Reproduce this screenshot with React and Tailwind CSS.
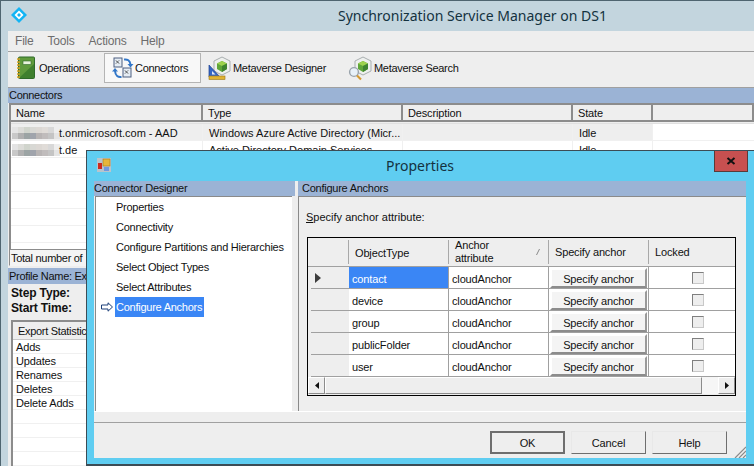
import React from "react";

function Diamond() {
  return (
    <svg width="18" height="18" viewBox="0 0 18 18" className="mb-[2px] block">
      <polygon points="9,1 17,9 9,17 1,9" fill="#12b4f4" />
      <polygon points="9,4.5 13.5,9 9,13.5 4.5,9" fill="#ffffff" />
      <polygon points="9,7 11,9 9,11 7,9" fill="#12b4f4" />
    </svg>
  );
}

function Notebook() {
  return (
    <svg width="20" height="24" viewBox="0 0 20 24" className="block">
      <rect x="2.5" y="1" width="16" height="21.5" rx="1" fill="#5f9a3c" stroke="#2f6a2a" />
      <polygon points="3,22 18,22 18,8" fill="#3f7f2e" />
      <rect x="7" y="5" width="8" height="3.5" fill="#e8f2dc" stroke="#2f6a2a" strokeWidth=".6" />
      {[3, 6, 9, 12, 15, 18, 21].map((y) => (
        <rect key={y} x="1" y={y - 0.7} width="3" height="1.5" fill="#d6a21f" />
      ))}
    </svg>
  );
}

function ConnIcon() {
  return (
    <svg width="22" height="22" viewBox="0 0 22 22" className="block">
      <rect x="2" y="1" width="8" height="9" fill="#e6edf4" stroke="#4c5f80" />
      <rect x="11" y="11" width="8" height="9" fill="#e6edf4" stroke="#4c5f80" />
      <path d="M4 3.5l3 3M7 3.5l-1 1M4 6.5l1-1M13 13.5l3 3M16 13.5l-1 1M13 16.5l1-1" stroke="#333" fill="none" />
      <path d="M12 2.5c3.5-.5 6 1 6.5 5" stroke="#3277c8" strokeWidth="2" fill="none" />
      <polygon points="15.5,7 21.5,7 18.5,10.5" fill="#3277c8" />
      <path d="M9.5 20c-3.5.5-6-1-6.5-6" stroke="#3277c8" strokeWidth="2" fill="none" />
      <polygon points="0,14.5 6,14.5 3,11" fill="#3277c8" />
    </svg>
  );
}

function Cube() {
  return (
    <g>
      <polygon points="14,1 22,5 22,15 14,19 6,15 6,5" fill="#eef0ee" stroke="#a9aeb0" />
      <polygon points="14,5 19,7.5 19,13 14,16 9,13 9,7.5" fill="#5fa63a" />
      <polygon points="14,5 19,7.5 14,10 9,7.5" fill="#9dd24e" />
      <polygon points="14,10 19,7.5 19,13 14,16" fill="#3f8430" />
    </g>
  );
}

function DesignerIcon() {
  return (
    <svg width="24" height="24" viewBox="0 0 24 24" className="block">
      <Cube />
      <polygon points="1,21 1,9 12,21" fill="#3566c4" stroke="#1e3f8e" strokeWidth=".7" />
      <polygon points="4,18.5 4,15 7.5,18.5" fill="#dfe8f7" />
      <rect x="1" y="20" width="16" height="3.5" fill="#e0b332" stroke="#9a7615" strokeWidth=".6" />
    </svg>
  );
}

function SearchIcon() {
  return (
    <svg width="25" height="25" viewBox="0 0 25 25" className="block">
      <g transform="translate(1 0)">
        <Cube />
      </g>
      <circle cx="6" cy="16" r="4.4" fill="#e8f1f8" stroke="#9aa3ab" strokeWidth="1.4" />
      <line x1="9" y1="19.5" x2="13" y2="23.5" stroke="#d49a32" strokeWidth="2.2" />
    </svg>
  );
}

function DialogIcon() {
  return (
    <svg width="14" height="14" viewBox="0 0 14 14" className="mb-[3px] block">
      <rect width="14" height="14" fill="#b9c4cc" />
      <rect x="6" y="1" width="7" height="7" fill="#e6b63a" stroke="#a87d18" strokeWidth=".6" />
      <rect x="1" y="5" width="4" height="6" fill="#cc2a1e" />
      <rect x="7" y="9" width="5" height="4" fill="#6f9ae0" />
    </svg>
  );
}

function HollowArrow() {
  return (
    <svg width="12" height="10" viewBox="0 0 12 10" className="block">
      <path d="M.5 3h6.5V.8L11.5 5 7 9.2V7H.5z" fill="#ffffff" stroke="#1c3f78" />
    </svg>
  );
}

function Mosaic() {
  const top = ["#e4e4e4", "#dcdcd8", "#d0d4cc", "#d8d8d4", "#dcd8d4", "#e0dcd8", "#d8d8d8", "#eeeeee"];
  const bottom = ["#c8c8c8", "#b0b0b0", "#9ca4a4", "#a0a4ac", "#b8b4b4", "#c0bcbc", "#c4c4c4", "#e4e4e4"];
  return (
    <span className="flex h-[12px] w-[48px] shrink-0 flex-col">
      {[top, bottom].map((row, r) => (
        <span key={r} className="flex flex-1">
          {row.map((c, i) => (
            <span key={i} className="h-full flex-1" style={{ backgroundColor: c }} />
          ))}
        </span>
      ))}
    </span>
  );
}

function ListHeader({ w, children, grow }) {
  return (
    <div
      className={`${grow ? "flex-1" : "shrink-0"} flex h-[17px] items-center border-r-2 border-b-2 border-r-[#8c8c8c] border-b-[#8c8c8c] pt-px pl-[5px] text-[#111]`}
      style={w ? { width: w } : undefined}
    >
      {children}
    </div>
  );
}

function ListRow({ first, name, type, state, shaded }) {
  const bg = shaded ? "bg-[#eeeeee]" : "bg-white";
  return (
    <div className="flex h-[17px] shrink-0 border-b border-[#f0f0f0] bg-white">
      <div className={`flex w-[192px] shrink-0 items-center overflow-hidden border-r border-[#f0f0f0] pt-[2px] pl-px ${bg}`}>
        {first && <Mosaic />}
        <span className="-ml-px whitespace-nowrap tracking-normal">{name}</span>
      </div>
      <div className={`flex w-[200px] shrink-0 items-center border-r border-[#f0f0f0] pt-[2px] pl-[6px] whitespace-nowrap tracking-normal ${bg}`}>{type}</div>
      <div className={`w-[170px] shrink-0 border-r border-[#f0f0f0] ${bg}`} />
      <div className={`flex w-[80px] shrink-0 items-center border-r border-[#f0f0f0] pt-[2px] pl-[6px] ${bg}`}>{state}</div>
      <div className="flex-1" />
    </div>
  );
}

function GridRow({ name, selected }) {
  return (
    <div className="flex h-[22px] shrink-0">
      <div className="relative flex w-[41px] shrink-0 items-center bg-[#eeeeee]">
        <div className="absolute right-0 bottom-0 left-[3px] h-px bg-[#a0a0a0]" />
        {selected && (
          <svg width="6" height="10" viewBox="0 0 6 10" className="ml-[7px] block">
            <polygon points="0,0 6,5 0,10" fill="#3c3c3c" />
          </svg>
        )}
      </div>
      <div className={`flex w-[100px] shrink-0 items-center border-r border-b border-[#a0a0a0] pt-[2px] pl-[3px] ${selected ? "bg-[#3a86f5] text-white" : "bg-white"}`}>{name}</div>
      <div className="flex w-[100px] shrink-0 items-center border-r border-b border-[#a0a0a0] bg-white pt-[2px] pl-[3px]">cloudAnchor</div>
      <div className="w-[100px] shrink-0 border-r border-b border-[#a0a0a0] bg-white p-px pb-0">
        <div className="flex h-[20px] items-center justify-center border-2 border-t-white border-l-white border-r-[#9a9a9a] border-b-[#8c8c8c] bg-[#f4f4f4] pt-px">Specify anchor</div>
      </div>
      <div className="flex flex-1 items-center justify-center border-b border-[#a0a0a0] bg-white pl-[12px]">
        <div className="h-[12px] w-[12px] border border-t-[#7f7f7f] border-l-[#7f7f7f] border-r-[#c8c8c8] border-b-[#c8c8c8] bg-[#eeeeee]" />
      </div>
    </div>
  );
}

function GridHead({ w, children, grow }) {
  return (
    <div className={`relative flex items-center pl-[6px] ${grow ? "flex-1" : "shrink-0"}`} style={w ? { width: w } : undefined}>
      {children}
      {!grow && <div className="absolute top-[2px] right-0 bottom-[2px] w-px bg-[#a8a8a8]" />}
    </div>
  );
}

function DlgButton({ children, primary }) {
  return (
    <div className={`flex h-[23px] w-[75px] items-center justify-center border bg-[#eeeeee] ${primary ? "border-2 border-[#6e6e6e]" : "border-t-[#e8e8e8] border-l-[#e8e8e8] border-r-[#6e6e6e] border-b-[#6e6e6e]"}`}>
      {children}
    </div>
  );
}

function Dialog() {
  const items = ["Properties", "Connectivity", "Configure Partitions and Hierarchies", "Select Object Types", "Select Attributes"];
  const rows = ["contact", "device", "group", "publicFolder", "user"];
  return (
    <div className="absolute top-[149px] left-[85px] flex h-[316px] w-[668px] flex-col border-t border-l border-b-2 border-[#3c4c55] bg-[#5fcdf1] pr-[8px] pb-[6px] pl-[7px]">
      <div className="relative flex h-[30px] shrink-0 items-center">
        <div className="ml-[3px]"><DialogIcon /></div>
        <div className="absolute top-[3px] left-[292px] font-[Noto_Sans,sans-serif] text-[14px] leading-[24px] tracking-normal text-[#14323f]">Properties</div>
        <div className="absolute top-0 -right-[2px] flex h-[21px] w-[34px] items-center justify-center border border-t-0 border-[#5a3a38] bg-[#c75050]">
          <svg width="10" height="8" viewBox="0 0 10 8" className="block">
            <path d="M1.5 1l7 6M8.5 1l-7 6" stroke="#111" strokeWidth="2" />
          </svg>
        </div>
      </div>
      <div className="flex min-h-0 flex-1 flex-col bg-[#eeeeee]">
        <div className="flex min-h-0 flex-1">
          <div className="flex w-[201px] shrink-0 flex-col">
            <div className="flex h-[15px] shrink-0 items-center bg-[#9bb3d5] pb-[2px] tracking-[-0.25px]">Connector Designer</div>
            <div className="mr-[3px] ml-px flex min-h-0 flex-1 flex-col border-t border-l border-t-[#8a8a8a] border-l-[#8a8a8a] bg-white tracking-[-0.25px]">
              {items.map((t) => (
                <div key={t} className="flex h-[20px] shrink-0 items-center pl-[20px] whitespace-nowrap">{t}</div>
              ))}
              <div className="flex h-[20px] shrink-0 items-center">
                <div className="ml-[5px] w-[14px] shrink-0"><HollowArrow /></div>
                <div className="flex h-[20px] items-center bg-[#3a86f5] pr-[2px] pl-px text-white">Configure Anchors</div>
              </div>
            </div>
          </div>
          <div className="w-[3px] shrink-0" />
          <div className="flex min-w-0 flex-1 flex-col">
            <div className="flex h-[15px] shrink-0 items-center bg-[#9bb3d5] pb-[2px] pl-[4px] tracking-[-0.25px]">Configure Anchors</div>
            <div className="flex min-h-0 flex-1 flex-col border-t border-l border-t-[#8a8a8a] border-l-[#8a8a8a] pt-[13px] pl-[8px]">
              <div className="-ml-px h-[14px] shrink-0 leading-[14px] tracking-normal"><span className="underline">S</span>pecify anchor attribute:</div>
              <div className="mt-[13px] flex h-[159px] w-[429px] shrink-0 flex-col border border-black bg-[#eeeeee]">
                <div className="flex h-[29px] shrink-0 border-b border-[#a0a0a0]">
                  <GridHead w={41} />
                  <GridHead w={100}><span className="mt-[2px]">ObjectType</span></GridHead>
                  <GridHead w={100}>
                    <span className="block leading-[13px]">Anchor<br />attribute</span>
                    <svg width="4" height="6" viewBox="0 0 4 6" className="absolute top-[11px] right-[9px] block"><path d="M.5 6L3.5 0" stroke="#888" /></svg>
                  </GridHead>
                  <GridHead w={100}>Specify anchor</GridHead>
                  <GridHead grow>Locked</GridHead>
                </div>
                {rows.map((r, i) => <GridRow key={r} name={r} selected={i === 0} />)}
                <div className="flex h-[17px] shrink-0 items-stretch">
                  <div className="flex w-[17px] shrink-0 items-center justify-center border border-t-white border-l-white border-r-[#8c8c8c] border-b-[#8c8c8c]">
                    <svg width="4" height="7" viewBox="0 0 4 7" className="block"><polygon points="4,0 0,3.5 4,7" fill="#111" /></svg>
                  </div>
                  <div className="flex-1 border border-t-white border-l-white border-r-[#8c8c8c] border-b-[#8c8c8c]" />
                  <div className="w-[16px] shrink-0 bg-[#f6f6f6]" />
                  <div className="flex w-[17px] shrink-0 items-center justify-center border border-t-white border-l-white border-r-[#8c8c8c] border-b-[#8c8c8c]">
                    <svg width="4" height="7" viewBox="0 0 4 7" className="block"><polygon points="0,0 4,3.5 0,7" fill="#111" /></svg>
                  </div>
                </div>
              </div>
            </div>
          </div>
        </div>
        <div className="h-[12px] shrink-0 border-t border-white border-b border-b-[#a0a0a0]" />
        <div className="relative flex h-[35px] shrink-0 items-start justify-end gap-[6px] pt-[8px] pr-[19px]">
          <DlgButton primary>OK</DlgButton>
          <DlgButton>Cancel</DlgButton>
          <DlgButton>Help</DlgButton>
          <svg width="12" height="12" viewBox="0 0 12 12" className="absolute right-0 bottom-0 block">
            <path d="M12 1L1 12M12 5L5 12M12 9L9 12" stroke="#8a8a8a" strokeWidth="1.2" />
          </svg>
        </div>
      </div>
    </div>
  );
}

function ToolButton({ icon, label, active, w, first }) {
  return (
    <div
      className={`flex h-[30px] shrink-0 items-center ${first ? "gap-[3px]" : "gap-px pl-[7px]"} ${active ? "border border-[#b4b4b4] bg-[#f8f8f8]" : ""}`}
      style={{ width: w }}
    >
      {icon}
      <span className="whitespace-nowrap">{label}</span>
    </div>
  );
}

export default function App() {
  const emptyRows = [0, 1, 2, 3, 4];
  const statRows = ["Adds", "Updates", "Renames", "Deletes", "Delete Adds", "", "", "", ""];
  return (
    <div className="relative flex h-[466px] w-[754px] flex-col overflow-hidden border-t border-l border-[#4f6570] bg-[#c3d5de] font-[Liberation_Sans,Arial,sans-serif] text-[11px] leading-[14px] tracking-[-0.15px] text-[#111]">
      <div className="relative flex h-[30px] shrink-0 items-center pl-[9px]">
        <Diamond />
        <div className="absolute top-[3px] left-[337px] font-[Noto_Sans,sans-serif] text-[14px] leading-[24px] tracking-normal whitespace-nowrap text-[#14323f]">Synchronization Service Manager on DS1</div>
      </div>
      <div className="ml-[7px] flex min-h-0 flex-1 flex-col bg-[#eeeeee]">
        <div className="flex h-[21px] shrink-0 items-center gap-[14px] border-b border-[#a0a0a0] pl-[7px] text-[12px] tracking-[-0.2px] text-[#6d6d6d]">
          <span>File</span><span>Tools</span><span>Actions</span><span>Help</span>
        </div>
        <div className="flex h-[36px] shrink-0 items-start border-b border-[#a0a0a0] pt-px pl-[8px] tracking-[-0.3px]">
          <ToolButton first w={88} icon={<Notebook />} label="Operations" />
          <ToolButton w={97} active icon={<ConnIcon />} label="Connectors" />
          <ToolButton w={140} icon={<DesignerIcon />} label="Metaverse Designer" />
          <ToolButton w={140} icon={<SearchIcon />} label="Metaverse Search" />
        </div>
        <div className="flex h-[15px] shrink-0 items-center bg-[#9bb3d5] pb-[2px] pl-px tracking-[-0.3px]">Connectors</div>
        <div className="ml-px flex h-[146px] shrink-0 flex-col border-t-2 border-l-2 border-[#8c8c8c] bg-white">
          <div className="flex h-[19px] shrink-0 border-b border-[#e0e0e0] bg-[#eeeeee]">
            <ListHeader w={192}>Name</ListHeader>
            <ListHeader w={200}>Type</ListHeader>
            <ListHeader w={170}>Description</ListHeader>
            <ListHeader w={80}>State</ListHeader>
            <ListHeader grow />
          </div>
          <ListRow first shaded name="t.onmicrosoft.com - AAD" type="Windows Azure Active Directory (Micr..." state="Idle" />
          <ListRow first name="t.de" type="Active Directory Domain Services" state="Idle" />
          {emptyRows.map((i) => <ListRow key={i} />)}
        </div>
        <div className="ml-px flex h-[17px] w-[78px] shrink-0 items-center overflow-hidden border border-t-[#8c8c8c] border-l-[#8c8c8c] border-r-transparent border-b-transparent bg-[#f4f4f4] pl-px tracking-[-0.3px] whitespace-nowrap">Total number of</div>
        <div className="mt-[2px] flex h-[16px] shrink-0 items-center bg-[#9bb3d5] pl-px tracking-[-0.3px] whitespace-nowrap">Profile Name: Export</div>
        <div className="flex h-[33px] shrink-0 flex-col justify-center pl-[3px] text-[12px] font-bold">
          <div>Step Type:</div>
          <div className="mt-px">Start Time:</div>
        </div>
        <div className="mt-[3px] ml-[3px] flex min-h-0 flex-1 flex-col border-t-2 border-l-2 border-[#8c8c8c] bg-white">
          <div className="flex h-[18px] shrink-0 items-center border-b border-[#c8c8c8] bg-[#eeeeee] pl-[5px] tracking-[-0.3px] whitespace-nowrap">Export Statistics</div>
          {statRows.map((s, i) => (
            <div key={i} className="flex h-[14px] shrink-0 items-center border-b border-[#f0f0f0] pl-[3px]">{s}</div>
          ))}
        </div>
      </div>
      <Dialog />
    </div>
  );
}
